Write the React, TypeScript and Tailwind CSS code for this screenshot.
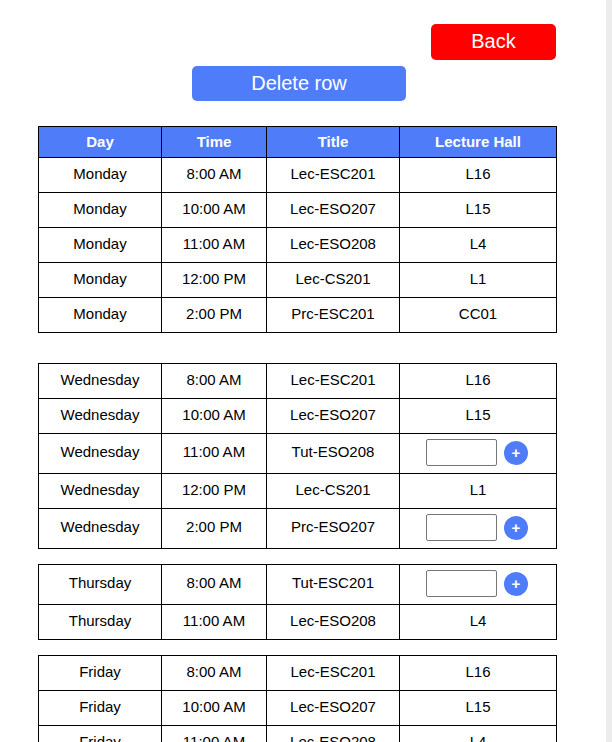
import React from "react";

type Row = { day: string; time: string; title: string; hall: string | null };

const groups: Row[][] = [
  [
    { day: "Monday", time: "8:00 AM", title: "Lec-ESC201", hall: "L16" },
    { day: "Monday", time: "10:00 AM", title: "Lec-ESO207", hall: "L15" },
    { day: "Monday", time: "11:00 AM", title: "Lec-ESO208", hall: "L4" },
    { day: "Monday", time: "12:00 PM", title: "Lec-CS201", hall: "L1" },
    { day: "Monday", time: "2:00 PM", title: "Prc-ESC201", hall: "CC01" },
  ],
  [
    { day: "Wednesday", time: "8:00 AM", title: "Lec-ESC201", hall: "L16" },
    { day: "Wednesday", time: "10:00 AM", title: "Lec-ESO207", hall: "L15" },
    { day: "Wednesday", time: "11:00 AM", title: "Tut-ESO208", hall: null },
    { day: "Wednesday", time: "12:00 PM", title: "Lec-CS201", hall: "L1" },
    { day: "Wednesday", time: "2:00 PM", title: "Prc-ESO207", hall: null },
  ],
  [
    { day: "Thursday", time: "8:00 AM", title: "Tut-ESC201", hall: null },
    { day: "Thursday", time: "11:00 AM", title: "Lec-ESO208", hall: "L4" },
  ],
  [
    { day: "Friday", time: "8:00 AM", title: "Lec-ESC201", hall: "L16" },
    { day: "Friday", time: "10:00 AM", title: "Lec-ESO207", hall: "L15" },
    { day: "Friday", time: "11:00 AM", title: "Lec-ESO208", hall: "L4" },
    { day: "Friday", time: "12:00 PM", title: "Lec-CS201", hall: "L1" },
  ],
];

const Cols = () => (
  <colgroup>
    <col className="w-[123px]" />
    <col className="w-[105px]" />
    <col className="w-[133px]" />
    <col className="w-[157px]" />
  </colgroup>
);

const HallCell = ({ hall }: { hall: string | null }) => {
  if (hall) return <>{hall}</>;
  return (
    <div className="flex items-center justify-center gap-[7px] pr-[2px]">
      <input
        type="text"
        className="w-[71px] h-[27px] border border-[#767676] rounded-[2px] bg-white"
      />
      <button className="w-6 h-6 rounded-full bg-[#4f7df9] text-white text-[15px] font-bold leading-none grid place-content-center">
        +
      </button>
    </div>
  );
};

const Table = ({ rows, header }: { rows: Row[]; header?: boolean }) => (
  <table className="w-[518px] table-fixed border-collapse border border-black text-[15px] text-center text-black">
    <Cols />
    {header && (
      <thead>
        <tr className="h-[31px] bg-[#4f7df9] text-white font-bold">
          <th className="border border-black p-0">Day</th>
          <th className="border border-black p-0">Time</th>
          <th className="border border-black p-0">Title</th>
          <th className="border border-black p-0">Lecture Hall</th>
        </tr>
      </thead>
    )}
    <tbody>
      {rows.map((r, i) => (
        <tr key={i} className={r.hall ? "h-[35px]" : "h-[40px]"}>
          <td className="border border-black p-0 pb-[2px]">{r.day}</td>
          <td className="border border-black p-0 pb-[2px]">{r.time}</td>
          <td className="border border-black p-0 pb-[2px]">{r.title}</td>
          <td className="border border-black p-0 pb-[2px]">
            <HallCell hall={r.hall} />
          </td>
        </tr>
      ))}
    </tbody>
  </table>
);

export default function App() {
  return (
    <div
      className="flex h-[742px] overflow-hidden bg-white"
      style={{ fontFamily: '"Liberation Sans", Arial, sans-serif' }}
    >
      <main className="w-[606px] pt-[24px] pl-[38px]">
        <div className="w-[518px] flex justify-end">
          <button className="w-[125px] h-[36px] rounded-[5px] bg-[#ff0000] text-white text-[20px] pb-[2px]">
            Back
          </button>
        </div>
        <div className="w-[518px] flex justify-center mt-[6px] pl-[4px]">
          <button className="w-[214px] h-[35px] rounded-[5px] bg-[#4f7df9] text-white text-[20px] pb-[2px]">
            Delete row
          </button>
        </div>
        <div className="mt-[25px]">
          <Table rows={groups[0]} header />
        </div>
        <div className="mt-[30px]">
          <Table rows={groups[1]} />
        </div>
        <div className="mt-[15px]">
          <Table rows={groups[2]} />
        </div>
        <div className="mt-[15px]">
          <Table rows={groups[3]} />
        </div>
      </main>
      <aside className="flex-1 bg-[#ececec]" />
    </div>
  );
}
